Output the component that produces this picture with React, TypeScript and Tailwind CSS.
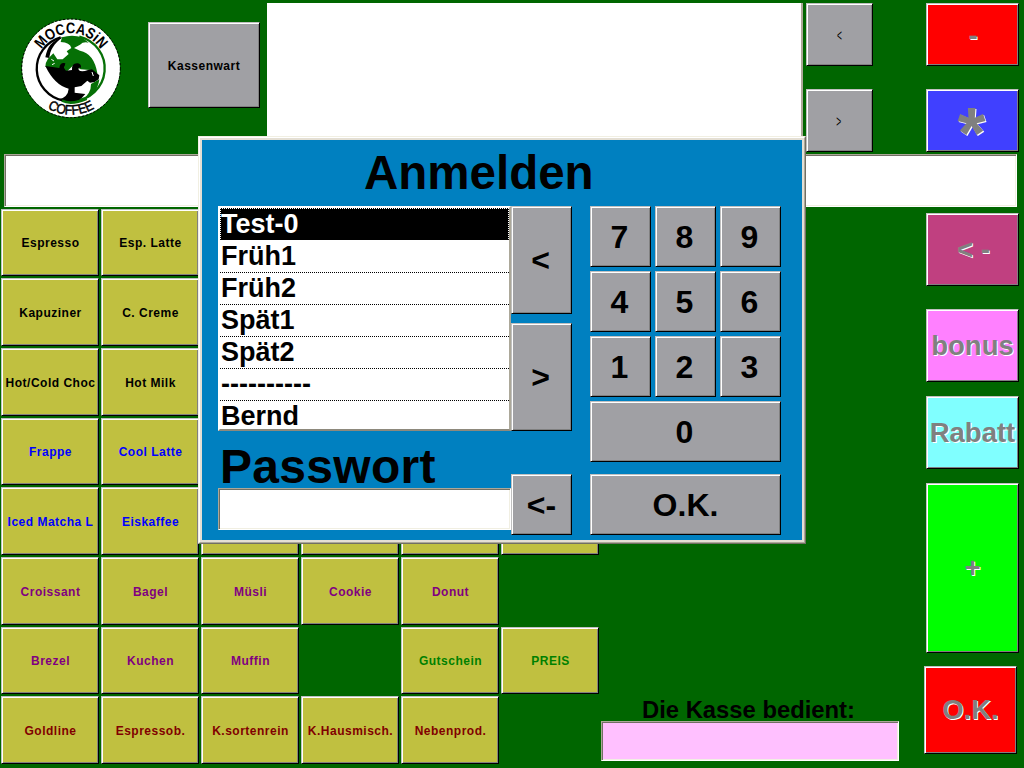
import type { ReactNode } from "react";
import { clsx } from "clsx";

const FONT = "font-['Liberation_Sans',Arial,sans-serif]";

function Key({ className, children, disabled }: { className?: string; children?: ReactNode; disabled?: boolean }) {
  return (
    <button
      className={clsx(
        "flex shrink-0 items-center justify-center whitespace-nowrap border border-t-[#c0c0c0] border-l-[#c0c0c0] border-r-black border-b-black p-0 font-bold leading-none shadow-[inset_1px_1px_0_#fff,inset_-1px_-1px_0_#808080]",
        disabled && "text-[27.5px] text-[#808080] [text-shadow:1px_1px_0_#fff]",
        className,
      )}
    >
      {children}
    </button>
  );
}

const sunken =
  "border border-t-[#aca899] border-l-[#aca899] border-r-white border-b-white shadow-[inset_1px_1px_0_#716f64,inset_-1px_-1px_0_#f1efe2]";

const BLACK = "text-black";
const BLUE = "text-[#0000ff]";
const PURPLE = "text-[#800080]";
const GREEN = "text-[#008000]";
const MAROON = "text-[#800000]";

const products: { color: string; items: (string | null)[] }[] = [
  { color: BLACK, items: ["Espresso", "Esp. Latte", null, null, null, null] },
  { color: BLACK, items: ["Kapuziner", "C. Creme", null, null, null, null] },
  { color: BLACK, items: ["Hot/Cold Choc", "Hot Milk", null, null, null, null] },
  { color: BLUE, items: ["Frappe", "Cool Latte", null, null, null, null] },
  { color: BLUE, items: ["Iced Matcha L", "Eiskaffee", "", "", "", ""] },
  { color: PURPLE, items: ["Croissant", "Bagel", "Müsli", "Cookie", "Donut", null] },
  { color: PURPLE, items: ["Brezel", "Kuchen", "Muffin", null, "Gutschein", "PREIS"] },
  { color: MAROON, items: ["Goldline", "Espressob.", "K.sortenrein", "K.Hausmisch.", "Nebenprod.", null] },
];

const users = ["Test-0", "Früh1", "Früh2", "Spät1", "Spät2", "----------", "Bernd"];

function Logo() {
  return (
    <svg viewBox="0 0 360 345" className="h-[115px] w-[120px] shrink-0">
      <circle cx="183" cy="175" r="147" fill="#fff" />
      <circle cx="183" cy="175" r="148" fill="none" stroke="#000" strokeWidth="3" strokeDasharray="7 5" />
      <path d="M152 82 A100 98 0 0 0 160 272" fill="none" stroke="#000" strokeWidth="7" />
      <path d="M160 80 C125 92 112 110 106 142 L118 144 C120 120 132 100 160 80Z" fill="#000" />
      <path d="M208 80 A100 98 0 0 1 190 273" fill="none" stroke="#067006" strokeWidth="7" />
      <path d="M156 82 Q186 72 216 82 L236 98 Q220 94 210 104 L192 114 L210 122 Q252 130 262 190 L258 200 L240 180 L212 178 L190 166 L170 185 L106 170 Q106 158 114 146 L130 130 L142 148 L158 148 L176 132 L170 124 L184 114 Q180 98 152 96Z" fill="#067006" />
      <path d="M106 168 L148 174 Q150 156 166 160 L164 168 Q158 172 168 182 L186 180 Q184 158 204 160 Q216 164 212 174 Q204 170 206 180 Q214 188 234 180 L246 178 L268 196 L266 208 L254 216 L240 218 L232 212 L214 228 L194 232 L194 248 L226 252 Q206 278 180 278 L146 268 Q174 262 176 236 Q134 226 106 168Z" fill="#000" />
      <path d="M243 222 L268 208 Q262 256 214 273 Q244 250 243 222Z" fill="#067006" />
      <path d="M156 272 Q184 286 230 266" fill="none" stroke="#067006" strokeWidth="8" />
      <path d="M124 148 l8 5 M126 164 l8 -4 M246 186 l4 12" stroke="#fff" strokeWidth="3" />
      <path id="logo-top" d="M78 175 A105 105 0 0 1 288 175" fill="none" />
      <path id="logo-bottom" d="M44 175 A139 139 0 0 0 322 175" fill="none" />
      <text fontFamily="Liberation Sans, Arial, sans-serif" fontSize="46" fontWeight="bold" fill="#000">
        <textPath href="#logo-top" startOffset="50%" textAnchor="middle" textLength="210" lengthAdjust="spacingAndGlyphs">
          MOCCASiN
        </textPath>
      </text>
      <text fontFamily="Liberation Sans, Arial, sans-serif" fontSize="41" fill="#000" stroke="#000" strokeWidth="1.5">
        <textPath href="#logo-bottom" startOffset="50%" textAnchor="middle" textLength="148" lengthAdjust="spacingAndGlyphs">
          COFFEE
        </textPath>
      </text>
    </svg>
  );
}

function ProductGrid() {
  return (
    <div className="ml-px grid w-[600px] shrink-0 grid-cols-[repeat(6,100px)] grid-rows-[69px_70px_70px_69px_70px_70px_69px_70px]">
      {products.flatMap((row, r) =>
        row.items.map((label, c) =>
          label === null ? (
            <div key={`${r}-${c}`} />
          ) : (
            <Key
              key={`${r}-${c}`}
              className={clsx(
                "mr-0.5 mb-0.5 bg-[#c0c040] pt-px pl-px text-[12px] tracking-[0.5px]",
                r === 6 && c > 3 ? GREEN : row.color,
              )}
            >
              {label}
            </Key>
          ),
        ),
      )}
    </div>
  );
}

function LoginDialog() {
  const key = "bg-[#a0a0a4] pr-0.5 text-[32px]";
  return (
    <div className="absolute top-[136px] left-[198px] h-[408px] w-[608px] border border-t-[#f1efe2] border-l-[#f1efe2] border-r-[#716f64] border-b-[#716f64] bg-white">
      <div className="h-full border border-t-white border-l-white border-r-[#aca899] border-b-[#aca899]">
        <div className="h-full border-2 border-[#e4dfd4] bg-[#0080c0] pl-4">
          <h1 className="h-[66px] pt-[6px] pl-[146px] text-[47.5px] leading-[54px] font-bold">Anmelden</h1>
          <div className="flex h-[225px]">
            <ul className="w-[293px] overflow-hidden border-2 border-t-white border-l-white border-r-[#aca899] border-b-[#8d897c] bg-white text-[27px] leading-[31px] font-bold">
              {users.map((u, i) => (
                <li
                  key={u}
                  className={clsx(
                    "overflow-hidden pl-px",
                    i === 0
                      ? "h-[33px] bg-black pt-px text-white outline-1 -outline-offset-1 outline-dotted outline-white"
                      : "h-8",
                    i < 6 && "border-b border-dotted border-b-black bg-clip-padding",
                  )}
                >
                  {u}
                </li>
              ))}
            </ul>
            <div className="flex flex-col justify-between">
              <Key className={clsx(key, "h-[108px] w-[61px]")}>&lt;</Key>
              <Key className={clsx(key, "h-[108px] w-[61px]")}>&gt;</Key>
            </div>
            <div className="ml-[18px] grid h-[256px] grid-cols-[repeat(3,61px)] grid-rows-[repeat(4,61px)] gap-1">
              {["7", "8", "9", "4", "5", "6", "1", "2", "3"].map((n) => (
                <Key key={n} className={key}>
                  {n}
                </Key>
              ))}
              <Key className={clsx(key, "col-span-3")}>0</Key>
            </div>
          </div>
          <div className="flex h-[104px]">
            <div className="w-[293px]">
              <div className="h-[57px] pt-[9px] pl-[2px] text-[48px] leading-[54px] font-bold tracking-[0.3px]">
                Passwort
              </div>
              <div className={clsx("h-[42px] bg-white", sunken)} />
            </div>
            <Key className="mt-[43px] h-[61px] w-[61px] bg-[#a0a0a4] text-[32px]">&lt;-</Key>
            <Key className="mt-[43px] ml-[18px] h-[61px] w-[191px] bg-[#a0a0a4] text-[32px]">O.K.</Key>
          </div>
        </div>
      </div>
    </div>
  );
}

export default function App() {
  return (
    <div className={clsx("relative flex h-[768px] w-[1024px] flex-col overflow-hidden bg-[#006600] text-black", FONT)}>
      <header className="flex h-[154px] shrink-0">
        <div className="pt-[10px] pl-[10px]">
          <Logo />
        </div>
        <Key className="mt-[22px] ml-[18px] h-[86px] w-[112px] bg-[#a0a0a4] pt-px text-[12px] tracking-[0.5px]">
          Kassenwart
        </Key>
        <div className="mt-[3px] ml-[7px] h-[149px] w-[536px] border-r-2 border-r-[#aca899] bg-white" />
        <div className="mt-[3px] ml-[3px] flex h-[149px] flex-col justify-between">
          <Key className="h-[63px] w-[67px] bg-[#a0a0a4] pt-0.5">
            <span className="scale-x-[0.7] scale-y-[1.35] pl-px text-[12px] font-normal">&lt;</span>
          </Key>
          <Key className="h-[63px] w-[67px] bg-[#a0a0a4] pt-0.5">
            <span className="scale-x-[0.7] scale-y-[1.35] pr-px text-[12px] font-normal">&gt;</span>
          </Key>
        </div>
        <div className="mt-[3px] ml-[53px] flex h-[149px] flex-col justify-between">
          <Key disabled className="h-[63px] w-[93px] bg-[#ff0000] pt-0.5 pl-px">
            -
          </Key>
          <Key disabled className="h-[63px] w-[93px] bg-[#4040ff]">
            <span className="pt-[24px] pr-0.5 text-[72px]">*</span>
          </Key>
        </div>
      </header>
      <div className={clsx("ml-1 h-[53px] w-[1013px] shrink-0 bg-white", sunken)} />
      <main className="flex h-[559px] pt-[2px]">
        <ProductGrid />
        <section className="flex w-[298px] flex-col pt-[487px]">
          <div className="h-[25px] pl-[41px] text-[23.8px] leading-[28px] font-bold whitespace-nowrap">
            Die Kasse bedient:
          </div>
          <div className={clsx("h-10 shrink-0 bg-[#ffc0ff]", sunken)} />
        </section>
        <aside className="ml-[25px] flex w-[95px] flex-col pt-1 pl-[2px]">
          <Key disabled className="h-[73px] w-[93px] bg-[#c04080] pl-0.5">
            &lt; -
          </Key>
          <Key disabled className="mt-[23px] h-[73px] w-[93px] bg-[#ff80ff]">
            bonus
          </Key>
          <Key disabled className="mt-[14px] h-[73px] w-[93px] bg-[#80ffff]">
            Rabatt
          </Key>
          <Key disabled className="mt-[14px] h-[170px] w-[93px] bg-[#00ff00]">
            +
          </Key>
          <Key disabled className="mt-[13px] -ml-[2px] h-[88px] w-[93px] bg-[#ff0000]">
            O.K.
          </Key>
        </aside>
      </main>
      <LoginDialog />
    </div>
  );
}
